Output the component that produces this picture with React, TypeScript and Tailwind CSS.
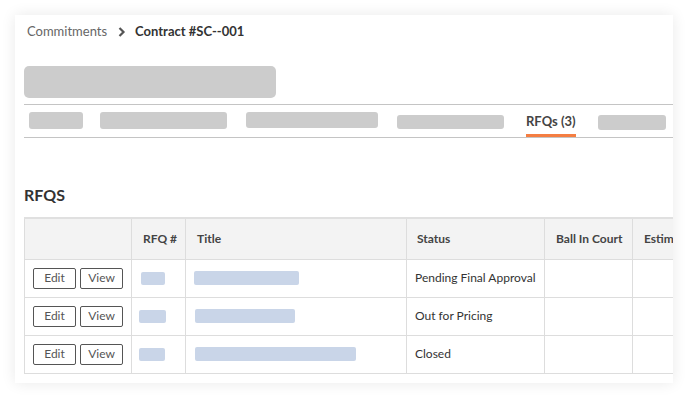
import React from "react";

const rows = [
  { rfq: [24, 140], title: [105, 193], status: "Pending Final Approval" },
  { rfq: [27, 138], title: [100, 194], status: "Out for Pricing" },
  { rfq: [26, 138], title: [161, 194], status: "Closed" },
];

export default function App() {
  return (
    <div
      className="w-[688px] h-[399px] bg-white overflow-hidden"
      style={{ fontFamily: "Lato, 'Open Sans', sans-serif" }}
    >
      <div className="ml-[15px] mt-[15px] w-[658px] h-[368px] bg-white shadow-[0_0_14px_rgba(0,0,0,0.09)] overflow-hidden">
        <div className="pl-[9px]">
          {/* breadcrumb */}
          <div className="flex items-center h-[16px] mt-[9px] pl-[3px] text-[13px]">
            <span className="text-[#666]">Commitments</span>
            <svg width="8" height="10" viewBox="0 0 8 10" className="ml-[11px] mr-[9px]">
              <path d="M1.5 1 L5.5 5 L1.5 9" fill="none" stroke="#555" strokeWidth="2.2" />
            </svg>
            <span className="font-bold text-[#333]">Contract #SC--001</span>
          </div>
          {/* title placeholder */}
          <div className="mt-[26px] w-[252px] h-[32px] rounded-[5px] bg-[#cccccc]" />
          {/* tabs */}
          <div className="mt-[6px] border-t border-b border-[#c4c4c4] h-[34px] flex items-start">
            <div className="ml-[5px] mt-[7px] w-[54px] h-[17px] rounded-[3px] bg-[#cccccc]" />
            <div className="ml-[17px] mt-[7px] w-[127px] h-[17px] rounded-[3px] bg-[#cccccc]" />
            <div className="ml-[19px] mt-[7px] w-[132px] h-[16px] rounded-[3px] bg-[#cccccc]" />
            <div className="ml-[19px] mt-[10px] w-[107px] h-[14px] rounded-[3px] bg-[#cccccc]" />
            <div className="ml-[21px] h-full flex flex-col items-center">
              <div className="mt-[8px] px-[1px] text-[13px] font-bold text-[#444] leading-[16px]">RFQs (3)</div>
              <div className="mt-auto w-[50px] h-[3px] bg-[#f47e42]" />
            </div>
            <div className="ml-[21px] mt-[10px] w-[68px] h-[15px] rounded-[3px] bg-[#cccccc]" />
          </div>
          {/* heading */}
          <div className="mt-[47px] text-[16px] font-bold text-[#333] leading-[20px]">RFQS</div>
          {/* table */}
          <div className="mt-[12px] overflow-hidden">
            <table className="border-collapse table-fixed w-[760px] text-[12px] text-[#333]">
              <colgroup>
                <col className="w-[107px]" />
                <col className="w-[54px]" />
                <col className="w-[221px]" />
                <col className="w-[138px]" />
                <col className="w-[88px]" />
                <col className="w-[152px]" />
              </colgroup>
              <thead>
                <tr className="bg-[#f3f3f3] h-[41px] text-[12px] font-bold text-[#444]">
                  <th className="border border-[#dddddd] border-t-2 border-t-[#e0e0e0]" />
                  <th className="border border-[#dddddd] border-t-2 border-t-[#e0e0e0] text-left pl-[11px] font-bold whitespace-nowrap">RFQ #</th>
                  <th className="border border-[#dddddd] border-t-2 border-t-[#e0e0e0] text-left pl-[11px] font-bold">Title</th>
                  <th className="border border-[#dddddd] border-t-2 border-t-[#e0e0e0] text-left pl-[10px] font-bold">Status</th>
                  <th className="border border-[#dddddd] border-t-2 border-t-[#e0e0e0] text-left pl-[11px] font-bold whitespace-nowrap">Ball In Court</th>
                  <th className="border border-[#dddddd] border-t-2 border-t-[#e0e0e0] text-left pl-[11px] font-bold whitespace-nowrap">Estimated Cost</th>
                </tr>
              </thead>
              <tbody>
                {rows.map((r, i) => (
                  <tr key={i} className="h-[38px]">
                    <td className="border border-[#dddddd] pl-[8px]">
                      <div className="flex gap-[4px]">
                        <button className="w-[43px] h-[21px] border border-[#555] rounded-[2px] text-[12px] text-[#555] leading-none bg-white">Edit</button>
                        <button className="w-[43px] h-[21px] border border-[#555] rounded-[2px] text-[12px] text-[#555] leading-none bg-white">View</button>
                      </div>
                    </td>
                    <td className="border border-[#dddddd]">
                      <div
                        className="h-[13px] rounded-[2px] bg-[#c9d5e8]"
                        style={{ width: r.rfq[0], marginLeft: r.rfq[1] - 131 }}
                      />
                    </td>
                    <td className="border border-[#dddddd]">
                      <div
                        className="h-[14px] rounded-[2px] bg-[#c9d5e8]"
                        style={{ width: r.title[0], marginLeft: r.title[1] - 185 }}
                      />
                    </td>
                    <td className="border border-[#dddddd] pl-[8px] whitespace-nowrap">{r.status}</td>
                    <td className="border border-[#dddddd]" />
                    <td className="border border-[#dddddd]" />
                  </tr>
                ))}
              </tbody>
            </table>
          </div>
        </div>
      </div>
    </div>
  );
}
